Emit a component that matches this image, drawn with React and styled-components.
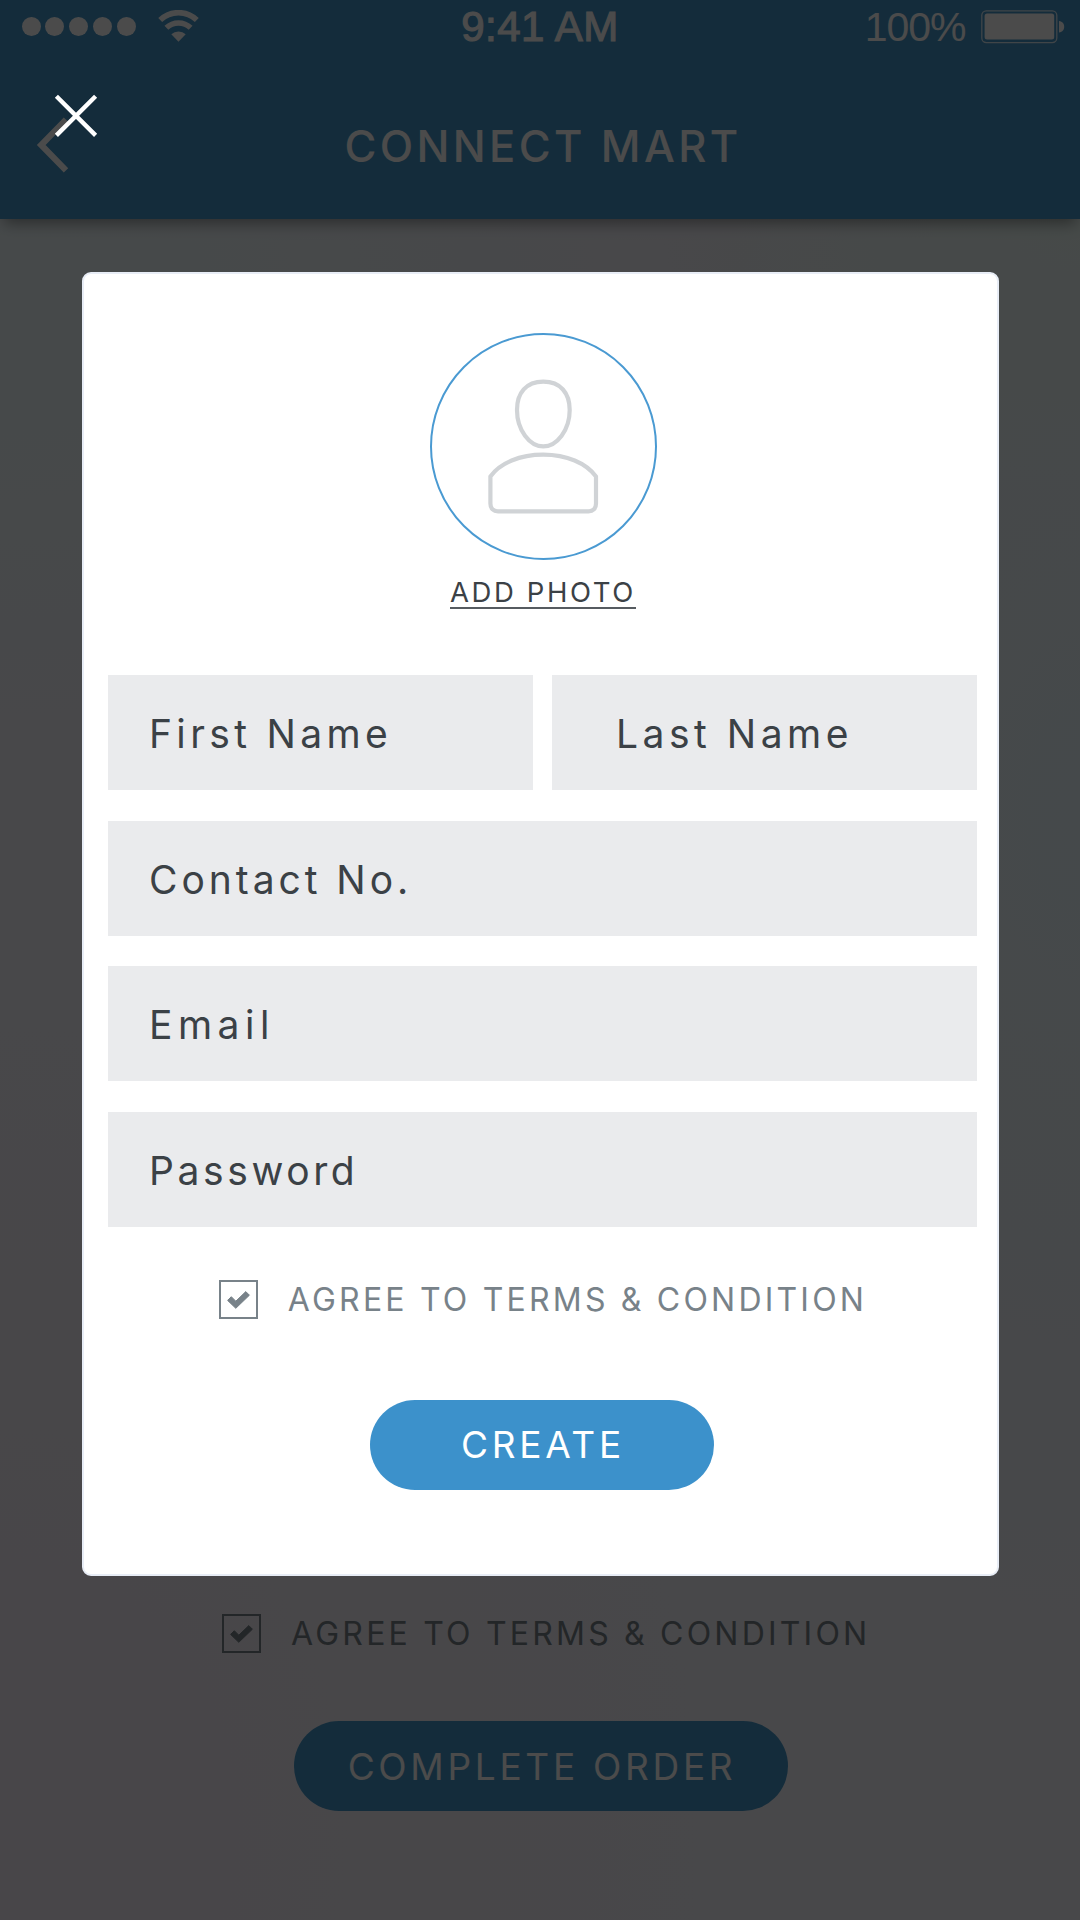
import React from "react";
import styled, { createGlobalStyle } from "styled-components";

const GlobalStyle = createGlobalStyle`
  *, *::before, *::after { box-sizing: border-box; }
  body {
    margin: 0;
    font-family: Inter, "Liberation Sans", sans-serif;
  }
  button { font: inherit; border: 0; cursor: pointer; }
  svg { display: block; flex: none; }
`;

const Screen = styled.div`
  position: relative;
  width: 1080px;
  height: 1920px;
  overflow: hidden;
  display: flex;
  flex-direction: column;
  background:
    radial-gradient(ellipse 420px 320px at 100% 11%, #ecfaf5 0%, rgba(236, 250, 245, 0) 100%),
    radial-gradient(ellipse 700px 800px at 0% 95%, #f5edf7 0%, rgba(245, 237, 247, 0) 100%),
    radial-gradient(ellipse 500px 900px at 100% 42%, #eaf7fd 0%, rgba(234, 247, 253, 0) 100%),
    radial-gradient(ellipse 700px 500px at 0% 15%, #edf9fb 0%, rgba(237, 249, 251, 0) 100%),
    #f4f3fa;
`;

const Header = styled.header`
  height: 219px;
  background: #4496c8;
  color: #fff;
  box-shadow: 0 8px 14px -4px rgba(0, 0, 0, 0.4);
`;

const StatusBar = styled.div`
  display: grid;
  grid-template-columns: 1fr auto 1fr;
  align-items: center;
  height: 53px;
  font-family: "Liberation Sans", Arial, sans-serif;
`;

const Signal = styled.div`
  display: flex;
  align-items: center;
  gap: 4.8px;
  padding-left: 21.7px;

  svg { margin: -2px 0 0 17.4px; }
`;

const Dot = styled.span`
  width: 19px;
  height: 19px;
  border-radius: 50%;
  background: #fff;
`;

const Time = styled.span`
  font-size: 42px;
  line-height: 48px;
  letter-spacing: 0.5px;
  -webkit-text-stroke: 1.1px #fff;
`;

const Power = styled.div`
  display: flex;
  align-items: center;
  justify-content: flex-end;
  gap: 15px;
  padding-right: 15.5px;
  font-size: 41px;
  line-height: 48px;
  letter-spacing: -1px;
`;

const NavBar = styled.nav`
  display: grid;
  grid-template-columns: 100px 1fr 100px;
  align-items: center;
  height: 166px;
  padding-top: 20px;
`;

const BackButton = styled.button`
  padding: 0 0 3px 36px;
  background: none;
  color: inherit;
`;

const Title = styled.h1`
  margin: 0;
  padding-left: 6px;
  text-align: center;
  font-size: 43.5px;
  line-height: 54px;
  font-weight: 500;
  letter-spacing: 3.4px;
`;

const Checkout = styled.main`
  flex: 1;
  display: flex;
  flex-direction: column;
  justify-content: flex-end;
  align-items: center;
  gap: 68px;
  padding: 0 0 109px 2px;
`;

const Agreement = styled.label`
  display: flex;
  align-items: center;
  gap: 30px;
  height: 39px;
  padding-left: ${(p) => p.$indent}px;
  color: #788289;
  font-size: 32px;
  line-height: 39px;
  letter-spacing: 3.2px;
  white-space: nowrap;
`;

const CheckBox = styled.span`
  display: block;
  width: 39px;
  height: 39px;
  border: 2px solid currentColor;
`;

const PillButton = styled.button`
  width: ${(p) => p.$width}px;
  height: 90px;
  padding: 1px 0 0 2px;
  border-radius: 45px;
  background: ${(p) => p.$color};
  color: #fff;
  font-size: 37px;
  line-height: 46px;
  letter-spacing: 3.7px;
`;

const Overlay = styled.div`
  position: absolute;
  inset: 0;
  padding: 272px 81px 344px 82px;
  background: rgba(0, 0, 0, 0.706);
`;

const CloseButton = styled.button`
  position: absolute;
  top: 92px;
  left: 52px;
  padding: 0;
  background: none;
  color: #fff;
`;

const Card = styled.section`
  display: flex;
  flex-direction: column;
  align-items: center;
  height: 100%;
  padding: 59px 20px 0 24px;
  border: 2px solid #e8edf6;
  border-radius: 9px;
  background: #fff;
`;

const Avatar = styled.div`
  width: 227px;
  height: 227px;
  margin-left: 2px;
  border-radius: 50%;
  border: 2px solid #4a9ad2;

  svg { margin: -2px; }
`;

const AddPhoto = styled.a`
  margin: 17px 0 66px 1px;
  border-bottom: 2px solid #565b60;
  color: #3b4146;
  font-size: 27.5px;
  line-height: 30px;
  letter-spacing: 2.6px;
`;

const Form = styled.form`
  display: flex;
  flex-direction: column;
  gap: 30.67px;
  width: 100%;
  margin-bottom: 53px;
`;

const NameRow = styled.div`
  display: grid;
  grid-template-columns: 1fr 1fr;
  gap: 19px;
`;

const Field = styled.div`
  height: 115px;
  padding: 2px 0 0 ${(p) => p.$indent || 41}px;
  background: #eaebed;
  color: #3b4146;
  font-size: 39px;
  line-height: 113px;
  letter-spacing: ${(p) => p.$tracking}px;
`;

const CreateButton = styled(PillButton)`
  margin: 81px 1px 0 0;
`;

const WifiIcon = () => (
  <svg width="41" height="32" viewBox="0 0 41 32" fill="none" stroke="#fff">
    <path d="M2.2 10 A26.5 26.5 0 0 1 38.8 10" strokeWidth="5.6" />
    <path d="M8.4 17.8 A17.6 17.6 0 0 1 32.6 17.8" strokeWidth="5.6" />
    <path d="M13.3 24.2 A10.6 10.6 0 0 1 27.7 24.2 L20.5 31.8 Z" fill="#fff" stroke="none" />
  </svg>
);

const BatteryIcon = () => (
  <svg width="84" height="34" viewBox="0 0 84 34" fill="#fff">
    <rect x="0.8" y="0.8" width="75" height="31.8" rx="4.5" fill="none" stroke="#fff" strokeOpacity="0.8" strokeWidth="1.3" />
    <rect x="3.6" y="3.6" width="69.6" height="26" rx="2.5" />
    <path d="M78 11 C81.6 11.5 83.2 14 83.2 16.7 C83.2 19.4 81.6 22 78 22.5 Z" />
  </svg>
);

const ChevronIcon = () => (
  <svg width="33" height="56" viewBox="0 0 33 56" fill="none" stroke="#fff" strokeWidth="6.2">
    <path d="M30 2.6 L5.2 28 L30 53.4" />
  </svg>
);

const CloseIcon = () => (
  <svg width="48" height="48" viewBox="0 0 48 48" fill="none" stroke="currentColor" strokeWidth="4.4">
    <path d="M4.4 4.2 L43.6 43.4 M43.6 4.2 L4.4 43.4" />
  </svg>
);

const CheckIcon = () => (
  <svg width="35" height="35" viewBox="2 2 35 35" fill="currentColor" stroke="currentColor" strokeWidth="1" strokeLinejoin="round">
    <path d="M8.6 20.4 L12.3 16.7 L16.8 21.2 L26.8 11.6 L30.4 15.2 L16.8 28.3 Z" />
  </svg>
);

const PersonIcon = () => (
  <svg width="227" height="227" viewBox="0 0 227 227" fill="none" stroke="#d0d3d6" strokeWidth="4.2" strokeLinejoin="round">
    <path d="M113.3 48.7 C130.5 48.7 139.7 60 139.7 77 C139.7 97 127 113.4 113.3 113.4 C99.6 113.4 87 97 87 77 C87 60 96.1 48.7 113.3 48.7 Z" />
    <path d="M60.4 143.5 C70 130 90 121.7 113.3 121.7 C136.6 121.7 156 130 166 143.5 V170.5 C166 175.5 163 178.3 158.5 178.3 H68 C63.4 178.3 60.4 175.5 60.4 170.5 Z" />
  </svg>
);

const Terms = ({ indent }) => (
  <Agreement $indent={indent}>
    <CheckBox><CheckIcon /></CheckBox>
    AGREE TO TERMS &amp; CONDITION
  </Agreement>
);

export default function App() {
  return (
    <>
      <GlobalStyle />
      <Screen>
        <Header>
          <StatusBar>
            <Signal>
              {[0, 1, 2, 3, 4].map((n) => <Dot key={n} />)}
              <WifiIcon />
            </Signal>
            <Time>9:41 AM</Time>
            <Power>
              100%
              <BatteryIcon />
            </Power>
          </StatusBar>
          <NavBar>
            <BackButton aria-label="Back"><ChevronIcon /></BackButton>
            <Title>CONNECT MART</Title>
          </NavBar>
        </Header>
        <Checkout>
          <Terms indent={10.5} />
          <PillButton $width={494} $color="#4496c8">COMPLETE ORDER</PillButton>
        </Checkout>
        <Overlay>
          <CloseButton aria-label="Close"><CloseIcon /></CloseButton>
          <Card>
            <Avatar><PersonIcon /></Avatar>
            <AddPhoto>ADD PHOTO</AddPhoto>
            <Form>
              <NameRow>
                <Field $tracking={4.35}>First Name</Field>
                <Field $tracking={4.5} $indent={64}>Last Name</Field>
              </NameRow>
              <Field $tracking={3.95}>Contact No.</Field>
              <Field $tracking={5.5}>Email</Field>
              <Field $tracking={3.6}>Password</Field>
            </Form>
            <Terms indent={1} />
            <CreateButton $width={344} $color="#3c91cb">CREATE</CreateButton>
          </Card>
        </Overlay>
      </Screen>
    </>
  );
}
